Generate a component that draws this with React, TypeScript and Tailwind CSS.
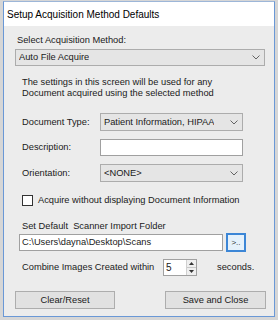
import React from 'react';

const font = { fontFamily: '"Liberation Sans", Arial, sans-serif' };

function Chevron() {
  return (
    <svg width="8" height="5" viewBox="0 0 8 5" className="shrink-0">
      <path d="M0.5 0.5 L4 4 L7.5 0.5" fill="none" stroke="#555" strokeWidth="0.9" />
    </svg>
  );
}

function Combo({ value, className }: { value: string; className?: string }) {
  return (
    <div
      className={`flex items-center justify-between bg-[#e5e5e5] border border-[#acacac] pl-[3px] pr-[4px] ${className ?? ''}`}
    >
      <span className="truncate">{value}</span>
      <Chevron />
    </div>
  );
}

function FieldRow({ label, children, h }: { label: string; children: React.ReactNode; h: string }) {
  return (
    <div className={`flex items-center ${h}`}>
      <span className="w-[78px] ml-[7px]">{label}</span>
      {children}
    </div>
  );
}

export default function App() {
  return (
    <div className="w-[278px] h-[320px] bg-[#d6d6d6] pt-[1px] pl-[3px]" style={font}>
      <div className="w-[272px] h-[316px] border border-[#6a98d6] border-t-[#9db6d8] bg-[#ececec] flex flex-col text-[9.3px] text-[#1a1a1a] leading-[11px]">
        <div className="h-[24px] bg-white flex items-center pl-[3px] text-[10px] text-black shrink-0">
          Setup Acquisition Method Defaults
        </div>

        <div className="flex flex-col pl-[11px]">
          <div className="mt-[8px] h-[13px] flex items-center ml-[2px]">Select Acquisition Method:</div>
          <Combo value="Auto File Acquire" className="mt-[2px] h-[17px] w-[250px]" />

          <div className="mt-[11px] ml-[7px]">
            <div>The settings in this screen will be used for any</div>
            <div>Document acquired using the selected method</div>
          </div>

          <FieldRow label="Document Type:" h="mt-[14px] h-[18px]">
            <Combo value="Patient Information, HIPAA" className="h-[18px] w-[143px]" />
          </FieldRow>

          <FieldRow label="Description:" h="mt-[8px] h-[17px]">
            <div className="h-[17px] w-[143px] bg-white border border-[#a0a0a0]" />
          </FieldRow>

          <FieldRow label="Orientation:" h="mt-[8px] h-[18px]">
            <Combo value="<NONE>" className="h-[18px] w-[143px]" />
          </FieldRow>

          <div className="mt-[13px] h-[11px] flex items-center ml-[7px]">
            <div className="w-[11px] h-[11px] bg-white border border-[#333] shrink-0" />
            <span className="ml-[5px]">Acquire without displaying Document Information</span>
          </div>

          <div className="mt-[14px] h-[12px] flex items-center ml-[7px]">Set Default&nbsp; Scanner Import Folder</div>

          <div className="mt-[1px] h-[19px] flex items-center">
            <div className="ml-[4px] h-[17px] w-[204px] bg-white border border-[#a0a0a0] flex items-center pl-[2px]">
              C:\Users\dayna\Desktop\Scans
            </div>
            <div className="ml-[3px] h-[19px] w-[20px] bg-[#e5f1fb] border-2 border-[#3c86d6] flex items-center justify-center text-[8px] text-[#333]">
              &gt;..
            </div>
          </div>

          <div className="mt-[6px] h-[18px] flex items-center ml-[7px]">
            <span className="w-[141px]">Combine Images Created within</span>
            <div className="h-[17px] w-[34px] bg-white border border-[#a0a0a0] flex">
              <div className="flex-1 flex items-center pl-[2px] text-[10px]">5</div>
              <div className="w-[10px] flex flex-col border-l border-[#d0d0d0]">
                <div className="flex-1 flex items-center justify-center bg-[#efefef] border-b border-[#c8c8c8]">
                  <svg width="5" height="3" viewBox="0 0 5 3"><path d="M0 3 L2.5 0 L5 3 Z" fill="#333" /></svg>
                </div>
                <div className="flex-1 flex items-center justify-center bg-[#efefef]">
                  <svg width="5" height="3" viewBox="0 0 5 3"><path d="M0 0 L2.5 3 L5 0 Z" fill="#333" /></svg>
                </div>
              </div>
            </div>
            <span className="ml-[20px]">seconds.</span>
          </div>

          <div className="mt-[15px] h-[18px] flex">
            <div className="w-[100px] h-[18px] bg-[#e1e1e1] border border-[#adadad] flex items-center justify-center">
              Clear/Reset
            </div>
            <div className="ml-[50px] w-[101px] h-[18px] bg-[#e1e1e1] border border-[#adadad] flex items-center justify-center">
              Save and Close
            </div>
          </div>
        </div>
      </div>
    </div>
  );
}
